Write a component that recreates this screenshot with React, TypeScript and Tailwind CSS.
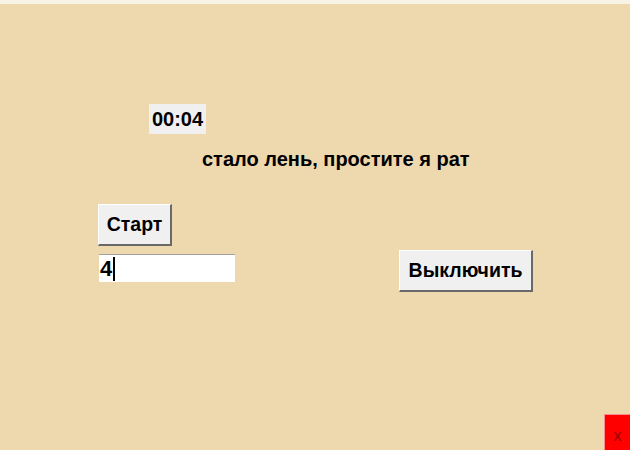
export default function App() {
  return (
    <div
      className="w-[630px] h-[450px] overflow-hidden flex flex-col bg-[#eed8ae] text-black"
      style={{ fontFamily: '"Liberation Sans", Arial, sans-serif' }}
    >
      <div className="h-[4px] bg-[#f9f3e6]" />

      <div className="mt-[100px] ml-[149px] w-[57px] h-[30px] bg-[#f0f0f0] flex items-center justify-center text-[20px] font-bold">
        00:04
      </div>

      <div className="mt-[14px] ml-[202px] text-[20px] leading-[22px] font-bold whitespace-nowrap">
        стало лень, простите я рат
      </div>

      <button className="mt-[34px] ml-[98px] w-[74px] h-[42px] bg-[#f0f0f0] border-t border-l border-white border-r-2 border-b-2 border-r-[#696969] border-b-[#696969] text-[19.5px] font-bold flex items-center justify-center">
        Старт
      </button>

      <div className="mt-[4px] flex items-start">
        <div className="mt-[4px] ml-[99px] w-[136px] h-[28px] bg-white border-t border-[#a0a0a0] flex items-center pl-[1px] text-[22px] font-bold leading-none">
          <span>4</span>
          <span className="w-[2px] h-[24px] bg-black ml-[1px]" />
        </div>
        <button className="ml-[164px] w-[134px] h-[42px] bg-[#f0f0f0] border-t border-l border-white border-r-2 border-b-2 border-r-[#696969] border-b-[#696969] text-[19.5px] font-bold flex items-center justify-center">
          Выключить
        </button>
      </div>

      <div className="mt-auto self-end w-[26px] h-[36px] bg-[#ff0000] border-t border-l border-[#ff8a8a] flex items-end justify-center pb-[6px] text-[16px] leading-none text-[#990000]">
        x
      </div>
    </div>
  );
}
